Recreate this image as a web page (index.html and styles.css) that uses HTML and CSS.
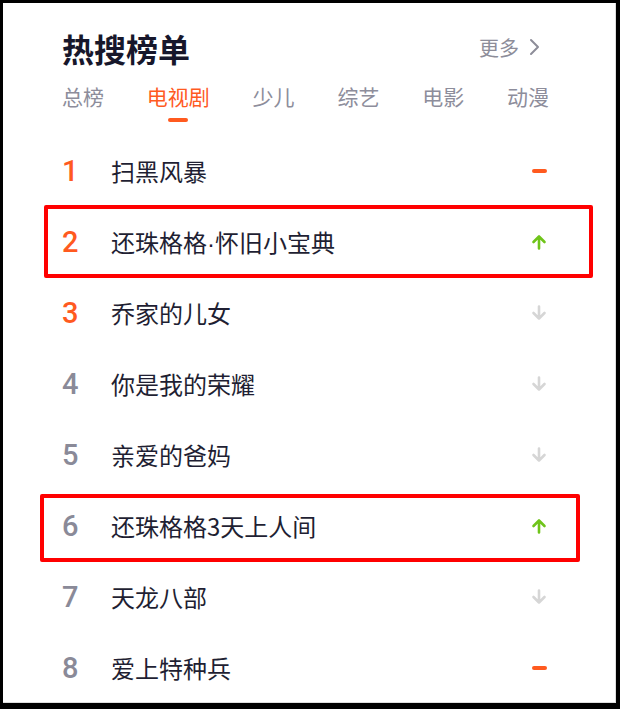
FILE: index.html
```html
<!DOCTYPE html>
<html lang="zh-CN">
<head>
    <meta charset="UTF-8">
    <meta name="viewport" content="width=device-width, initial-scale=1.0">
    <title>热搜榜单</title>
    <link rel="stylesheet" href="styles.css">
</head>
<body>
    <div class="frame">
        <div class="card">
            <div class="head">
                <h1>热搜榜单</h1>
                <a class="more" href="#">更多
                    <svg width="12" height="18" viewBox="0 0 12 18"><path d="M3 2 L10 9 L3 16" fill="none" stroke="#8d8d99" stroke-width="2" stroke-linecap="round" stroke-linejoin="round"/></svg>
                </a>
            </div>

            <ul class="tabs">
                <li>总榜</li>
                <li class="active">电视剧</li>
                <li>少儿</li>
                <li>综艺</li>
                <li>电影</li>
                <li>动漫</li>
            </ul>

            <ol class="list">
                <li class="row top"><span class="num">1</span><span class="name">扫黑风暴</span><span class="trend"><i class="flat"></i></span></li>
                <li class="row top"><span class="num">2</span><span class="name">还珠格格<span class="dot">·</span>怀旧小宝典</span><span class="trend"><svg class="up" width="16" height="16" viewBox="0 0 16 16"><path d="M8 14.5 V2.5 M2.5 8 L8 2.5 L13.5 8" /></svg></span></li>
                <li class="row top"><span class="num">3</span><span class="name">乔家的儿女</span><span class="trend"><svg class="down" width="16" height="16" viewBox="0 0 16 16"><path d="M8 1.5 V13.5 M2.5 8 L8 13.5 L13.5 8" /></svg></span></li>
                <li class="row"><span class="num">4</span><span class="name">你是我的荣耀</span><span class="trend"><svg class="down" width="16" height="16" viewBox="0 0 16 16"><path d="M8 1.5 V13.5 M2.5 8 L8 13.5 L13.5 8" /></svg></span></li>
                <li class="row"><span class="num">5</span><span class="name">亲爱的爸妈</span><span class="trend"><svg class="down" width="16" height="16" viewBox="0 0 16 16"><path d="M8 1.5 V13.5 M2.5 8 L8 13.5 L13.5 8" /></svg></span></li>
                <li class="row"><span class="num">6</span><span class="name">还珠格格3天上人间</span><span class="trend"><svg class="up" width="16" height="16" viewBox="0 0 16 16"><path d="M8 14.5 V2.5 M2.5 8 L8 2.5 L13.5 8" /></svg></span></li>
                <li class="row"><span class="num">7</span><span class="name">天龙八部</span><span class="trend"><svg class="down" width="16" height="16" viewBox="0 0 16 16"><path d="M8 1.5 V13.5 M2.5 8 L8 13.5 L13.5 8" /></svg></span></li>
                <li class="row"><span class="num">8</span><span class="name">爱上特种兵</span><span class="trend"><i class="flat"></i></span></li>
            </ol>

            <!-- Markierungen -->
            <div class="mark mark-a"></div>
            <div class="mark mark-b"></div>
        </div>
    </div>
</body>
</html>
```

FILE: styles.css
```css
body {
    margin: 0;
    padding: 0;
    background-color: #000;
    font-family: "Noto Sans CJK SC", "Noto Sans", sans-serif;
}

.frame {
    padding: 3px 4px 5px 3px;
}

.card {
    position: relative;
    height: 700px;
    background-color: #fff;
    border-right: 1px solid #ddd;
    border-bottom: 1px solid #ddd;
    padding-left: 59px;
    box-sizing: border-box;
}

.head {
    width: 478px;
    display: flex;
    align-items: center;
    justify-content: space-between;
    padding-top: 23px;
}

h1 {
    margin: 0;
    font-size: 32px;
    line-height: 44px;
    font-weight: 700;
    color: #17172b;
}

.more {
    display: flex;
    align-items: center;
    gap: 9px;
    font-size: 20px;
    color: #8d8d99;
    text-decoration: none;
    margin-top: -2px;
}

.tabs {
    list-style: none;
    margin: 0;
    padding: 0;
    width: 487px;
    display: flex;
    justify-content: space-between;
    margin-top: 10px;
}

.tabs li {
    position: relative;
    font-size: 21px;
    line-height: 32px;
    color: #8d8d9b;
}

.tabs li.active {
    color: #ff5a1f;
}

.tabs li.active::after {
    content: "";
    position: absolute;
    left: 50%;
    bottom: -10px;
    width: 20px;
    height: 4px;
    margin-left: -10px;
    border-radius: 2px;
    background-color: #ff5a1f;
}

.list {
    list-style: none;
    margin: 0;
    padding: 0;
    width: 485px;
    margin-top: 23px;
}

.row {
    display: flex;
    align-items: center;
    height: 71px;
}

.num {
    width: 49px;
    font-family: Roboto, "Noto Sans", sans-serif;
    font-size: 29px;
    font-weight: 500;
    color: #8a8a98;
}

.row.top .num {
    color: #ff5a1f;
}

.name {
    flex: 1;
    font-size: 24px;
    color: #1f1f33;
}

.dot {
    font-family: "Liberation Sans", sans-serif;
}

.trend {
    width: 16px;
    height: 16px;
    display: flex;
    align-items: center;
    justify-content: center;
}

.flat {
    display: block;
    width: 15px;
    height: 4px;
    border-radius: 2px;
    background-color: #ff5a1f;
}

.trend svg path {
    fill: none;
    stroke-width: 2.6;
    stroke-linecap: round;
    stroke-linejoin: round;
}

.up path {
    stroke: #6fc41a;
}

.down path {
    stroke: #d6d6d6;
}

.mark {
    position: absolute;
    border: 4px solid #ff0000;
    border-radius: 2px;
    box-sizing: border-box;
}

.mark-a {
    left: 41px;
    top: 202px;
    width: 549px;
    height: 73px;
}

.mark-b {
    left: 37px;
    top: 491px;
    width: 540px;
    height: 68px;
}
```
